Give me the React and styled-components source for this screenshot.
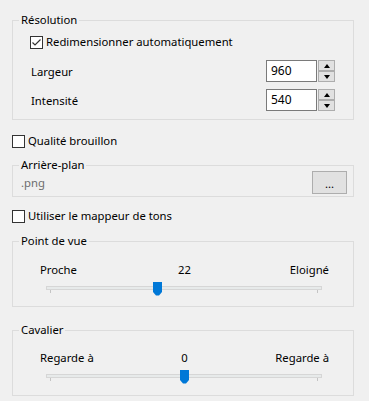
import styled, { createGlobalStyle } from "styled-components";

const GlobalStyle = createGlobalStyle`
  body {
    margin: 0;
    background: #f0f0f0;
    font-family: "Noto Sans", "Liberation Sans", sans-serif;
    font-size: 11.3px;
    color: #000;
  }
`;

const CheckMark = () => (
  <svg width="11" height="11" viewBox="0 0 11 11">
    <polyline points="1.5,5.5 4,8 9.5,2.5" fill="none" stroke="#333" strokeWidth="1.2" />
  </svg>
);

const Checkbox = ({ checked, children }) => (
  <CheckRow>
    <Box>{checked && <CheckMark />}</Box>
    <span>{children}</span>
  </CheckRow>
);

const Spinner = ({ value }) => (
  <Spin>
    <SpinInput>{value}</SpinInput>
    <SpinCol>
      <SpinButton>
        <Arrow up />
      </SpinButton>
      <SpinButton>
        <Arrow />
      </SpinButton>
    </SpinCol>
  </Spin>
);

const Slider = ({ min, max, value }) => {
  const pct = (value - min) / (max - min);
  return (
    <SliderBox>
      <Track />
      <Thumb style={{ left: `calc(${pct} * (100% - 8px) - 0.5px)` }}>
        <svg width="9" height="14" viewBox="0 0 9 14">
          <path d="M0 0H9V10L6 13.5H3L0 10Z" fill="#0078d7" />
        </svg>
      </Thumb>
      <Ticks>
        <Tick />
        <Tick />
      </Ticks>
    </SliderBox>
  );
};

const App = () => {
  return (
    <>
      <GlobalStyle />
      <Page>
        <Group>
          <Legend>Résolution</Legend>
          <GroupBody $pad="6px 12px 8px 11px">
            <Checkbox checked>Redimensionner automatiquement</Checkbox>
            <FieldRow $top={10}>
              <Label>Largeur</Label>
              <Spinner value="960" />
            </FieldRow>
            <FieldRow $top={7}>
              <Label>Intensité</Label>
              <Spinner value="540" />
            </FieldRow>
          </GroupBody>
        </Group>

        <Spaced $top={13}>
          <Checkbox>Qualité brouillon</Checkbox>
        </Spaced>

        <Group $top={8}>
          <Legend>Arrière-plan</Legend>
          <GroupBody $pad="0 0 2px 2px">
            <FileRow>
              <Muted>.png</Muted>
              <Browse>...</Browse>
            </FileRow>
          </GroupBody>
        </Group>

        <Spaced $top={11}>
          <Checkbox>Utiliser le mappeur de tons</Checkbox>
        </Spaced>

        <Group $top={9}>
          <Legend>Point de vue</Legend>
          <GroupBody $pad="13px 18px 4px 21px">
            <Scale>
              <span>Proche</span>
              <Value>22</Value>
              <End>Eloigné</End>
            </Scale>
            <Slider min={0} max={55} value={22} />
          </GroupBody>
        </Group>

        <Group $top={15}>
          <Legend>Cavalier</Legend>
          <GroupBody $pad="12px 18px 5px 21px">
            <Scale>
              <span>Regarde à</span>
              <Value>0</Value>
              <End>Regarde à</End>
            </Scale>
            <Slider min={-100} max={100} value={0} />
          </GroupBody>
        </Group>
      </Page>
    </>
  );
};

const Page = styled.div`
  width: 342px;
  padding: 12px 15px 0 12px;
`;

const Group = styled.fieldset`
  margin: ${({ $top }) => $top || 0}px 0 0;
  padding: 0 6px;
  border: 1px solid #dcdcdc;
  min-width: 0;
`;

const Legend = styled.legend`
  padding: 0 2px;
  line-height: 16px;
`;

const GroupBody = styled.div`
  padding: ${({ $pad }) => $pad};
`;

const Spaced = styled.div`
  margin-top: ${({ $top }) => $top}px;
`;

const CheckRow = styled.div`
  display: flex;
  align-items: center;
  gap: 3px;
  height: 16px;
  line-height: 16px;
`;

const Box = styled.div`
  box-sizing: border-box;
  width: 13px;
  height: 13px;
  border: 1px solid #333;
  background: #fff;
  display: flex;
  align-items: center;
  justify-content: center;
`;

const FieldRow = styled.div`
  display: flex;
  align-items: center;
  justify-content: space-between;
  margin-top: ${({ $top }) => $top}px;
  height: 22px;
`;

const Label = styled.span`
  padding-left: 1px;
`;

const Spin = styled.div`
  display: flex;
  gap: 1px;
`;

const SpinInput = styled.div`
  box-sizing: border-box;
  width: 51px;
  height: 22px;
  border: 1px solid #7a7a7a;
  background: #fff;
  padding-left: 4px;
  line-height: 20px;
  font-size: 12px;
`;

const SpinCol = styled.div`
  display: flex;
  flex-direction: column;
  justify-content: space-between;
  height: 22px;
`;

const SpinButton = styled.div`
  box-sizing: border-box;
  width: 17px;
  height: 11px;
  border: 1px solid #adadad;
  background: #e1e1e1;
  display: flex;
  align-items: center;
  justify-content: center;
`;

const Arrow = styled.div`
  width: 0;
  height: 0;
  border-left: 3.5px solid transparent;
  border-right: 3.5px solid transparent;
  ${({ up }) =>
    up ? "border-bottom: 4px solid #000;" : "border-top: 4px solid #000;"}
`;

const FileRow = styled.div`
  display: flex;
  align-items: center;
  justify-content: space-between;
  margin-top: -2px;
`;

const Muted = styled.span`
  color: #6d6d6d;
`;

const Browse = styled.div`
  box-sizing: border-box;
  width: 35px;
  height: 23px;
  border: 1px solid #adadad;
  background: #e1e1e1;
  text-align: center;
  line-height: 24px;
`;

const Scale = styled.div`
  display: grid;
  grid-template-columns: 1fr auto 1fr;
  height: 16px;
  line-height: 16px;
`;

const Value = styled.span`
  text-align: center;
`;

const End = styled.span`
  text-align: right;
`;

const SliderBox = styled.div`
  position: relative;
  height: 24px;
  margin: 0 7px 0 6px;
`;

const Track = styled.div`
  box-sizing: border-box;
  position: relative;
  top: 8px;
  height: 4px;
  border: 1px solid #d6d6d6;
  background: #e7eaea;
`;

const Thumb = styled.div`
  position: absolute;
  top: 4px;
  height: 14px;
  line-height: 0;
`;

const Ticks = styled.div`
  display: flex;
  justify-content: space-between;
  margin: 8px 4px 0;
`;

const Tick = styled.div`
  width: 1px;
  height: 3px;
  background: #c4c4c4;
`;

export default App;
